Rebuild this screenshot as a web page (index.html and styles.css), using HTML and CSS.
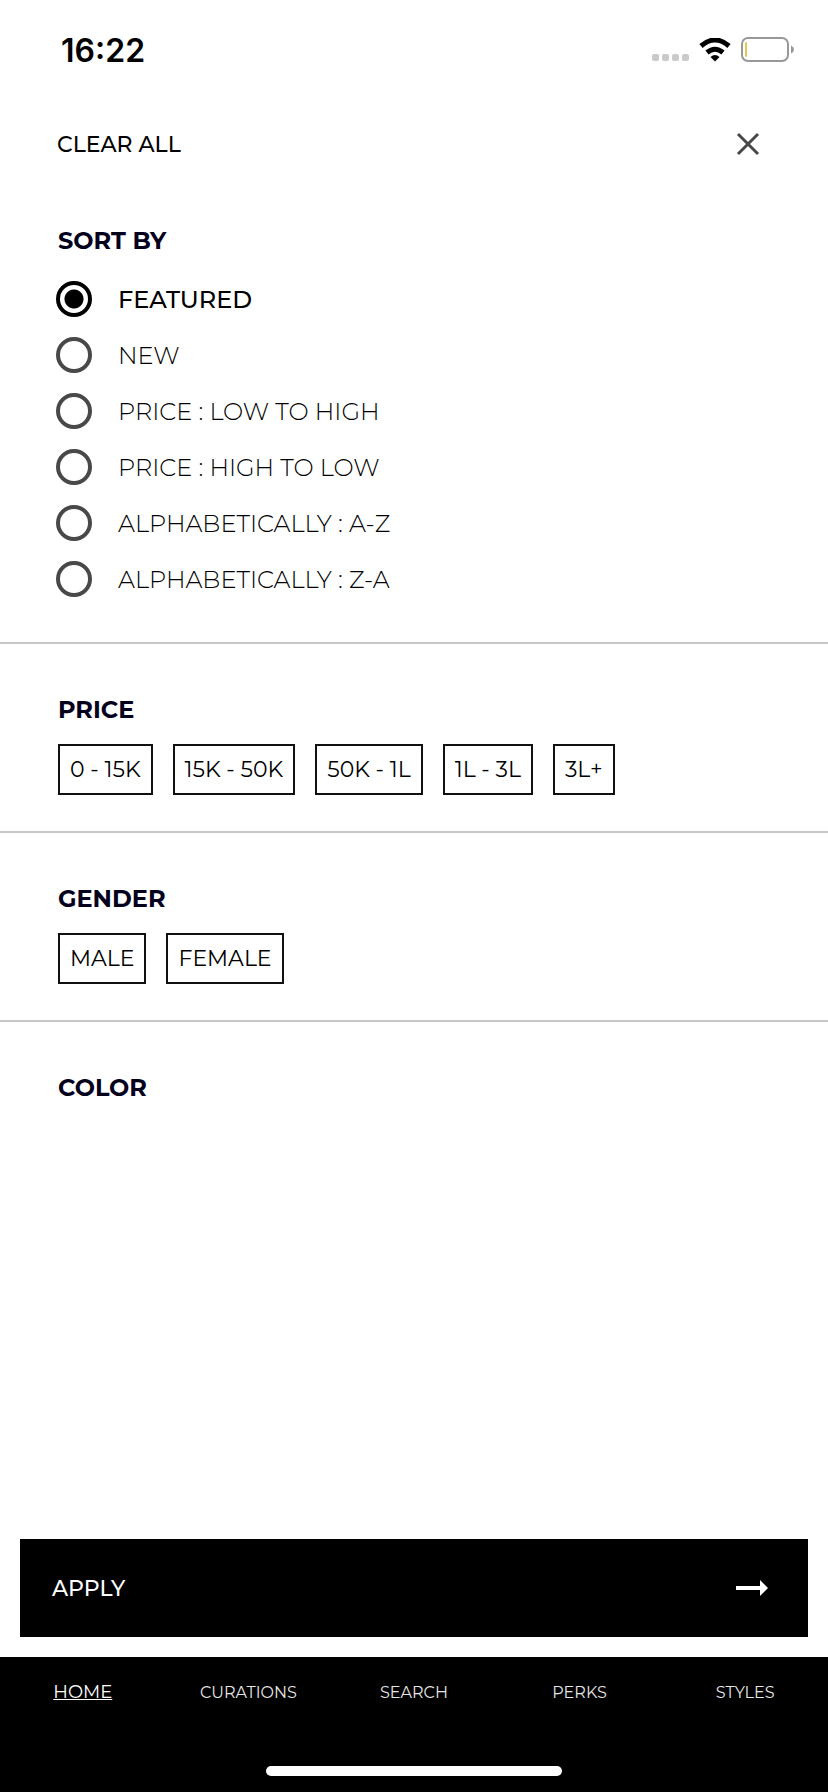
FILE: index.html
```html
<!DOCTYPE html>
<html lang="en">
<head>
    <meta charset="UTF-8">
    <meta name="viewport" content="width=device-width, initial-scale=1">
    <title>Filters</title>
    <link rel="stylesheet" href="styles.css">
</head>
<body>
<div id="app">
    <div class="status-bar">
        <span class="time">16:22</span>
        <div class="status-icons">
            <svg width="37" height="24" viewBox="0 0 37 24" fill="#cacaca">
                <rect x="0" y="16" width="7" height="7" rx="2"/>
                <rect x="10" y="16" width="7" height="7" rx="2"/>
                <rect x="20" y="16" width="7" height="7" rx="2"/>
                <rect x="30" y="16" width="7" height="7" rx="2"/>
            </svg>
            <svg width="32" height="24" viewBox="0 0 32 24">
                <path d="M2 8Q16 -4 30 8M8 14.500Q16 8 24 14.500" fill="none" stroke="#000" stroke-width="5"/>
                <path d="M11.500 19Q16 15 20.500 19L16 23.500Z"/>
            </svg>
            <svg width="53" height="26" viewBox="0 0 53 26">
                <rect x="1" y="1" width="46" height="23" rx="6" fill="none" stroke="#98989a" stroke-width="2"/>
                <rect x="4" y="5" width="2" height="15" rx="1" fill="#e5c84e"/>
                <path d="M50 8.500Q53 10 53 12.500T50 16.500Z" fill="#98989a"/>
            </svg>
        </div>
    </div>

    <header class="toolbar">
        <button type="button" class="clear">CLEAR ALL</button>
        <button type="button" class="close" aria-label="Close">
            <svg width="24" height="24" viewBox="0 0 24 24">
                <path d="M2 2L22 22M22 2L2 22" stroke="#48484a" stroke-width="3"/>
            </svg>
        </button>
    </header>

    <main>
        <section class="sort">
            <h2>SORT BY</h2>
            <div class="options">
                <label><input type="radio" name="sort" checked><span>FEATURED</span></label>
                <label><input type="radio" name="sort"><span>NEW</span></label>
                <label><input type="radio" name="sort"><span>PRICE : LOW TO HIGH</span></label>
                <label><input type="radio" name="sort"><span>PRICE : HIGH TO LOW</span></label>
                <label><input type="radio" name="sort"><span>ALPHABETICALLY : A-Z</span></label>
                <label><input type="radio" name="sort"><span>ALPHABETICALLY : Z-A</span></label>
            </div>
        </section>

        <section class="filter">
            <h2>PRICE</h2>
            <div class="chips">
                <button type="button">0 - 15K</button>
                <button type="button">15K - 50K</button>
                <button type="button">50K - 1L</button>
                <button type="button">1L - 3L</button>
                <button type="button">3L+</button>
            </div>
        </section>

        <section class="filter">
            <h2>GENDER</h2>
            <div class="chips">
                <button type="button">MALE</button>
                <button type="button">FEMALE</button>
            </div>
        </section>

        <section class="filter">
            <h2>COLOR</h2>
        </section>
    </main>

    <button type="button" class="apply">
        <span>APPLY</span>
        <svg width="32" height="16" viewBox="0 0 32 16" fill="#fff">
            <path d="M0 6H24V0L32 8L24 16V10H0Z"/>
        </svg>
    </button>

    <footer>
        <nav>
            <a href="#" class="active">HOME</a>
            <a href="#">CURATIONS</a>
            <a href="#">SEARCH</a>
            <a href="#">PERKS</a>
            <a href="#">STYLES</a>
        </nav>
        <div class="home-bar"></div>
    </footer>
</div>
</body>
</html>
```
FILE: styles.css
```css
* {
    box-sizing: border-box;
}
body {
    margin: 0;
    background-color: #fff;
    color: #000;
    font-family: Montserrat, Inter, sans-serif;
}
button {
    border: none;
    background: none;
    padding: 0;
    color: inherit;
    font-family: inherit;
    cursor: pointer;
}
svg {
    display: block;
}
#app {
    display: flex;
    flex-direction: column;
    min-height: 100vh;
}
.status-bar {
    display: flex;
    justify-content: space-between;
    align-items: center;
    height: 100px;
    padding: 0 34px 0 61px;
}
.time {
    font-family: Inter, sans-serif;
    font-size: 32px;
    font-weight: 600;
}
.status-icons {
    display: flex;
    align-items: center;
    gap: 10px;
}
.toolbar {
    display: flex;
    justify-content: space-between;
    align-items: center;
    height: 88px;
    padding: 0 68px 0 57px;
}
.clear {
    font-size: 22px;
    font-weight: 500;
}
main {
    flex: 1;
}
h2 {
    margin: 0;
    color: #03001c;
    font-size: 24px;
    font-weight: 700;
    line-height: 30px;
}
.sort {
    padding: 38px 58px 35px;
}
.options {
    margin: 15px 0 0 -2px;
}
.options label {
    display: flex;
    align-items: center;
    gap: 26px;
    height: 56px;
    font-size: 24px;
    font-weight: 300;
}
.options input {
    appearance: none;
    width: 36px;
    height: 36px;
    margin: 0;
    border: 4px solid #48484a;
    border-radius: 50%;
}
.options input:checked {
    border-color: #000;
    background: radial-gradient(circle, #000 9px, #fff 10px);
}
.options input:checked + span {
    font-weight: 500;
}
.filter {
    min-height: 189px;
    padding: 51px 58px 35px;
    border-top: 2px solid #c7c7c9;
}
.chips {
    display: flex;
    flex-wrap: wrap;
    gap: 20px;
    margin-top: 19px;
}
.chips button {
    height: 51px;
    padding: 0 10px;
    border: 2px solid #111;
    font-size: 22px;
    font-weight: 400;
}
.apply {
    display: flex;
    justify-content: space-between;
    align-items: center;
    height: 98px;
    margin: 0 20px 20px;
    padding: 0 40px 0 32px;
    background-color: #000;
    color: #fff;
    font-size: 22px;
    font-weight: 500;
}
footer {
    background-color: #000;
    padding: 20px 0 16px;
}
nav {
    display: grid;
    grid-template-columns: repeat(5, 1fr);
    align-items: center;
    height: 30px;
    text-align: center;
}
nav a {
    color: #e6e6e6;
    font-size: 16px;
    font-weight: 400;
    text-decoration: none;
}
nav a.active {
    color: #fff;
    font-size: 18px;
    text-decoration: underline;
}
.home-bar {
    width: 296px;
    height: 10px;
    margin: 59px auto 0;
    border-radius: 5px;
    background-color: #fff;
}
```
